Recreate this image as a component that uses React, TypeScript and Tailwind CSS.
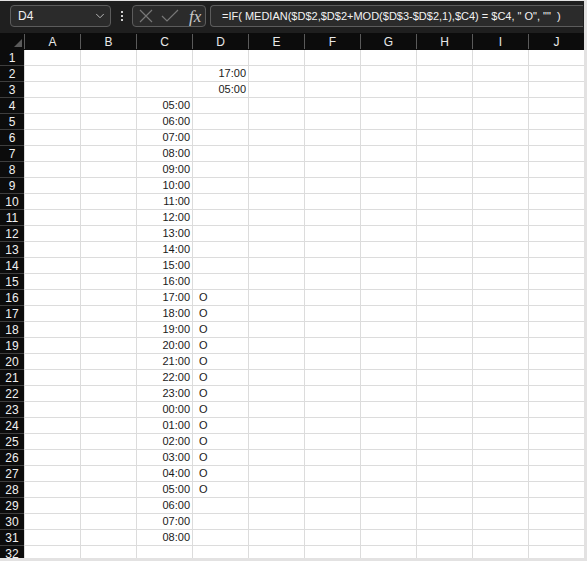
import { ChevronDown } from "lucide-react";

const cols = ["A", "B", "C", "D", "E", "F", "G", "H", "I", "J"];

const hours = [
  "05:00", "06:00", "07:00", "08:00", "09:00", "10:00", "11:00", "12:00", "13:00", "14:00",
  "15:00", "16:00", "17:00", "18:00", "19:00", "20:00", "21:00", "22:00", "23:00", "00:00",
  "01:00", "02:00", "03:00", "04:00", "05:00", "06:00", "07:00", "08:00",
];

function cellValue(row: number, col: string) {
  if (col === "D" && row === 2) return "17:00";
  if (col === "D" && row === 3) return "05:00";
  if (col === "C" && row >= 4 && row <= 31) return hours[row - 4];
  if (col === "D" && row >= 16 && row <= 28) return "O";
  return "";
}

export default function App() {
  const rows = Array.from({ length: 32 }, (_, i) => i + 1);

  return (
    <div
      className="w-[587px] h-[561px] overflow-hidden bg-[#e3e2e2] pt-px pr-[3px] pb-[3px]"
      style={{ fontFamily: '"Liberation Sans", Arial, sans-serif' }}
    >
      <div className="h-[557px] overflow-hidden">
        {/* toolbar */}
        <div className="h-[32px] bg-[#1f1f1f] flex items-start pt-[4px] pl-[10px] pr-[1px]">
          <div className="shrink-0 w-[101px] h-[22px] rounded-[4px] border border-[#5c5c5c] bg-[#2b2b2b] flex items-center justify-between pl-[7px] pr-[3px] text-[12px] text-[#f0f0f0]">
            <span>D4</span>
            <ChevronDown className="w-[14px] h-[14px] text-[#c8c8c8]" strokeWidth={1.5} />
          </div>
          <div className="shrink-0 w-[21px] h-[22px] flex flex-col items-center justify-center gap-[2px]">
            <span className="w-[2px] h-[2px] bg-[#d0d0d0]" />
            <span className="w-[2px] h-[2px] bg-[#d0d0d0]" />
            <span className="w-[2px] h-[2px] bg-[#d0d0d0]" />
          </div>
          <div className="shrink-0 w-[74px] h-[22px] rounded-[4px] border border-[#5c5c5c] bg-[#2b2b2b] flex items-center pl-[5px]">
            <svg width="16" height="16" viewBox="0 0 16 16" className="text-[#777]">
              <path d="M2 2 L14 14 M14 2 L2 14" stroke="currentColor" strokeWidth="1.2" fill="none" />
            </svg>
            <svg width="20" height="16" viewBox="0 0 20 16" className="ml-[6px] text-[#777]">
              <path d="M2 8 L7 13 L18 2" stroke="currentColor" strokeWidth="1.2" fill="none" />
            </svg>
            <span
              className="ml-[9px] text-[17px] italic text-[#c8c8c8] leading-none"
              style={{ fontFamily: '"Liberation Serif", "DejaVu Serif", serif' }}
            >
              fx
            </span>
          </div>
          <div className="ml-[4px] min-w-0 flex-1 h-[22px] rounded-l-[4px] border border-r-0 border-[#5c5c5c] bg-[#2b2b2b] flex items-center pl-[11px] text-[11px] text-[#f2f2f2] whitespace-pre overflow-hidden">
            {'=IF( MEDIAN($D$2,$D$2+MOD($D$3-$D$2,1),$C4) = $C4, " O", ""  )'}
          </div>
        </div>

        {/* sheet */}
        <div className="grid grid-cols-[24px_repeat(10,56px)] text-[11px]">
          <div className="h-[17px] bg-[#0c0c0c] relative">
            <svg width="8" height="8" viewBox="0 0 8 8" className="absolute right-[2px] bottom-[3px]">
              <path d="M8 0 L8 8 L0 8 Z" fill="#5a5a5a" />
            </svg>
          </div>
          {cols.map((c) => (
            <div key={c} className="h-[17px] bg-[#0c0c0c] flex items-stretch">
              <div className="w-px my-[1px] bg-[#5a5a5a]" />
              <div className="flex-1 flex items-center justify-center text-[#e8e8e8] text-[12px]">{c}</div>
            </div>
          ))}
          {rows.map((r) => (
            <div key={r} className="contents">
              <div className="h-[16px] bg-[#0c0c0c] border-b border-[#3e3e3e] flex items-center justify-center text-[12px] text-[#f0f0f0]">
                {r}
              </div>
              {cols.map((c) => {
                const v = cellValue(r, c);
                const isO = v === "O";
                return (
                  <div
                    key={c}
                    className={`h-[16px] bg-white border-l border-b border-[#dcdcdc] flex items-center text-[#1a1a1a] ${
                      isO ? "justify-start pl-[6px]" : "justify-end pr-[2px]"
                    }`}
                  >
                    {v}
                  </div>
                );
              })}
            </div>
          ))}
        </div>
      </div>
    </div>
  );
}
